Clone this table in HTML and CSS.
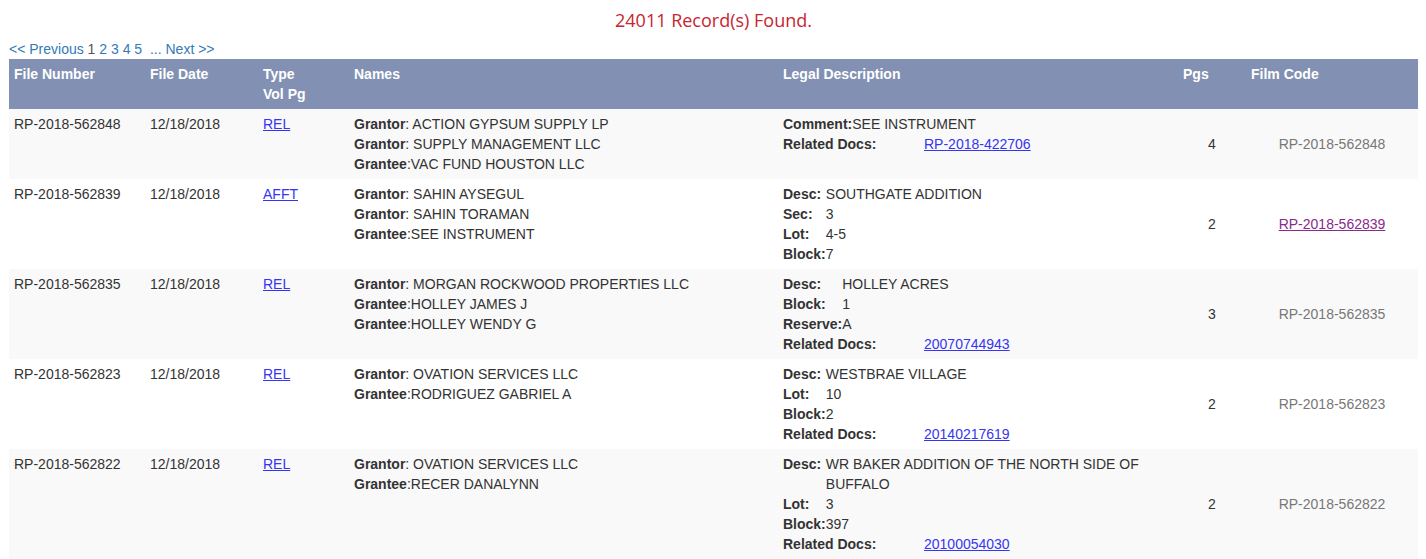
FILE: index.html
```html
<!DOCTYPE html>
<html>
<head>
<meta charset="utf-8">
<title>Records</title>
<link rel="stylesheet" href="styles.css">
</head>
<body>
<div class="page">
  <div class="found">24011 Record(s) Found.</div>
  <div class="pager">
    <a href="#">&lt;&lt; Previous</a> <span class="cur">1</span> <a href="#">2</a> <a href="#">3</a> <a href="#">4</a> <a href="#">5</a>&nbsp; <a href="#">... Next &gt;&gt;</a>
  </div>
  <table class="results">
    <colgroup>
      <col class="c-num"><col class="c-date"><col class="c-type"><col class="c-names"><col class="c-legal"><col class="c-pgs"><col class="c-film">
    </colgroup>
    <thead>
      <tr>
        <th>File Number</th>
        <th>File Date</th>
        <th>Type<br>Vol Pg</th>
        <th>Names</th>
        <th>Legal Description</th>
        <th>Pgs</th>
        <th>Film Code</th>
      </tr>
    </thead>
    <tbody>
      <tr class="alt">
        <td>RP-2018-562848</td>
        <td>12/18/2018</td>
        <td><a class="doc" href="#">REL</a></td>
        <td><b>Grantor</b>: ACTION GYPSUM SUPPLY LP<br><b>Grantor</b>: SUPPLY MANAGEMENT LLC<br><b>Grantee</b>:VAC FUND HOUSTON LLC</td>
        <td>
          <table class="kv"><tr><th>Comment:</th><td>SEE INSTRUMENT</td></tr></table>
          <table class="rel"><tr><th>Related Docs:</th><td><a class="doc" href="#">RP-2018-422706</a></td></tr></table>
        </td>
        <td class="mid">4</td>
        <td class="mid film">RP-2018-562848</td>
      </tr>
      <tr>
        <td>RP-2018-562839</td>
        <td>12/18/2018</td>
        <td><a class="doc" href="#">AFFT</a></td>
        <td><b>Grantor</b>: SAHIN AYSEGUL<br><b>Grantor</b>: SAHIN TORAMAN<br><b>Grantee</b>:SEE INSTRUMENT</td>
        <td>
          <table class="kv">
            <tr><th>Desc:</th><td>SOUTHGATE ADDITION</td></tr>
            <tr><th>Sec:</th><td>3</td></tr>
            <tr><th>Lot:</th><td>4-5</td></tr>
            <tr><th>Block:</th><td>7</td></tr>
          </table>
        </td>
        <td class="mid">2</td>
        <td class="mid film"><a class="visited" href="#">RP-2018-562839</a></td>
      </tr>
      <tr class="alt">
        <td>RP-2018-562835</td>
        <td>12/18/2018</td>
        <td><a class="doc" href="#">REL</a></td>
        <td><b>Grantor</b>: MORGAN ROCKWOOD PROPERTIES LLC<br><b>Grantee</b>:HOLLEY JAMES J<br><b>Grantee</b>:HOLLEY WENDY G</td>
        <td>
          <table class="kv">
            <tr><th>Desc:</th><td>HOLLEY ACRES</td></tr>
            <tr><th>Block:</th><td>1</td></tr>
            <tr><th>Reserve:</th><td>A</td></tr>
          </table>
          <table class="rel"><tr><th>Related Docs:</th><td><a class="doc" href="#">20070744943</a></td></tr></table>
        </td>
        <td class="mid">3</td>
        <td class="mid film">RP-2018-562835</td>
      </tr>
      <tr>
        <td>RP-2018-562823</td>
        <td>12/18/2018</td>
        <td><a class="doc" href="#">REL</a></td>
        <td><b>Grantor</b>: OVATION SERVICES LLC<br><b>Grantee</b>:RODRIGUEZ GABRIEL A</td>
        <td>
          <table class="kv">
            <tr><th>Desc:</th><td>WESTBRAE VILLAGE</td></tr>
            <tr><th>Lot:</th><td>10</td></tr>
            <tr><th>Block:</th><td>2</td></tr>
          </table>
          <table class="rel"><tr><th>Related Docs:</th><td><a class="doc" href="#">20140217619</a></td></tr></table>
        </td>
        <td class="mid">2</td>
        <td class="mid film">RP-2018-562823</td>
      </tr>
      <tr class="alt">
        <td>RP-2018-562822</td>
        <td>12/18/2018</td>
        <td><a class="doc" href="#">REL</a></td>
        <td><b>Grantor</b>: OVATION SERVICES LLC<br><b>Grantee</b>:RECER DANALYNN</td>
        <td>
          <table class="kv">
            <tr><th>Desc:</th><td>WR BAKER ADDITION OF THE NORTH SIDE OF BUFFALO</td></tr>
            <tr><th>Lot:</th><td>3</td></tr>
            <tr><th>Block:</th><td>397</td></tr>
          </table>
          <table class="rel"><tr><th>Related Docs:</th><td><a class="doc" href="#">20100054030</a></td></tr></table>
        </td>
        <td class="mid">2</td>
        <td class="mid film">RP-2018-562822</td>
      </tr>
    </tbody>
  </table>
</div>
</body>
</html>
```

FILE: styles.css
```css
html, body {
  margin: 0;
  padding: 0;
  background: #ffffff;
}

body {
  font-family: "Liberation Sans", Arial, Helvetica, sans-serif;
  font-size: 14px;
  line-height: 20px;
  color: #333333;
}

.page {
  padding: 8px 8px 0 9px;
}

.found {
  font-family: "Open Sans", "Liberation Sans", sans-serif;
  font-size: 18px;
  line-height: 24px;
  color: #c7252f;
  text-align: center;
}

.pager {
  margin-top: 7px;
  line-height: 20px;
  color: #555555;
}

.pager a {
  color: #337ab7;
  text-decoration: none;
}

.results {
  width: 1409px;
  border-collapse: collapse;
  table-layout: fixed;
}

.c-num { width: 136px; }
.c-date { width: 113px; }
.c-type { width: 91px; }
.c-names { width: 429px; }
.c-legal { width: 400px; }
.c-pgs { width: 68px; }
.c-film { width: 172px; }

.results > thead > tr > th {
  background: #8291b3;
  color: #ffffff;
  font-weight: bold;
  text-align: left;
  vertical-align: top;
  padding: 5px;
  height: 40px;
}

.results > tbody > tr > td {
  padding: 5px;
  vertical-align: top;
  text-align: left;
}

.results > tbody > tr.alt > td {
  background: #f9f9f9;
}

.results > tbody > tr > td.mid {
  vertical-align: middle;
  text-align: center;
}

.results > tbody > tr > td.film {
  color: #777777;
}

a.doc {
  color: #3535f2;
  text-decoration: underline;
}

a.visited {
  color: #8a2a8a;
  text-decoration: underline;
}

b {
  font-weight: bold;
}

.kv,
.rel {
  border-collapse: collapse;
}

.kv th,
.kv td,
.rel th,
.rel td {
  padding: 0;
  text-align: left;
  vertical-align: top;
}

.kv th,
.rel th {
  font-weight: bold;
  white-space: nowrap;
}

.rel th {
  width: 141px;
}
```
